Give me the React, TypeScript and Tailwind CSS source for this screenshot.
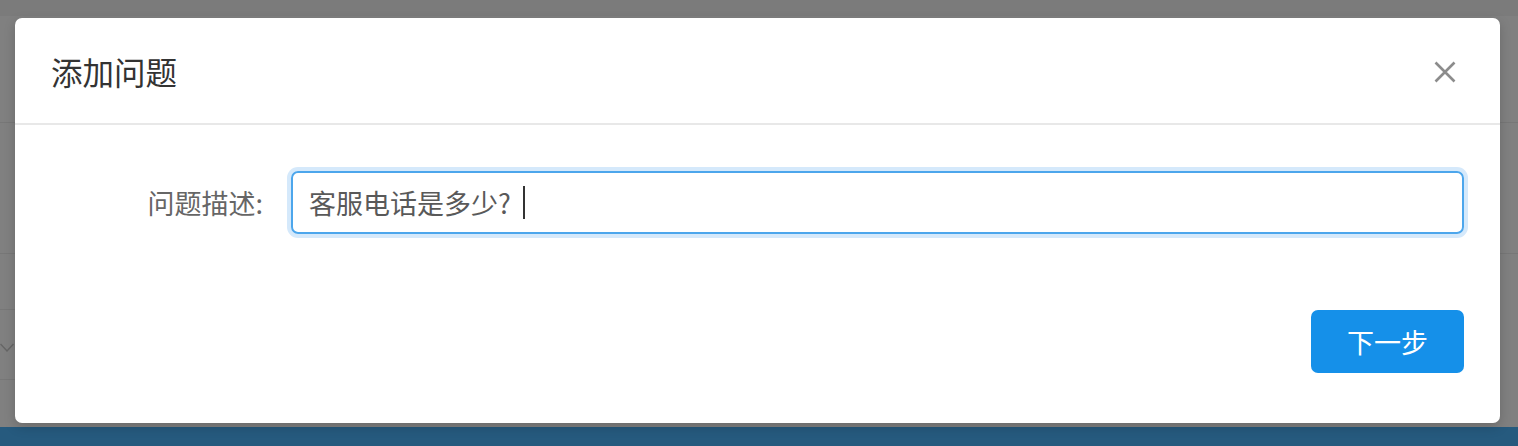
import React from "react";

export default function App() {
  return (
    <div
      className="relative w-[1518px] h-[446px] overflow-hidden bg-[#808080] flex flex-col"
      style={{ fontFamily: '"Noto Sans CJK SC", "Noto Sans", sans-serif' }}
    >
      {/* underlying page (dimmed by overlay) */}
      <div className="h-[16px] bg-[#7b7b7b] shrink-0" />
      <div className="h-[107px] border-b border-[#777777] shrink-0" />
      <div className="h-[131px] border-b border-[#777777] shrink-0" />
      <div className="h-[56px] shrink-0 flex">
        <div className="w-[700px] border-b border-[#777777]" />
      </div>
      <div className="h-[70px] shrink-0 flex">
        <div className="w-[700px] border-b border-[#777777] flex items-center">
          <svg width="14" height="10" viewBox="0 0 14 10" className="mt-[6px]">
            <path d="M0.5 1 L7 8 L13.5 1" fill="none" stroke="#666666" strokeWidth="1.5" />
          </svg>
        </div>
      </div>
      <div className="flex-1" />
      <div className="h-[19px] bg-[#265a7e] shrink-0" />

      {/* modal */}
      <div className="absolute left-[15px] top-[18px] w-[1485px] h-[405px] bg-white rounded-[7px] shadow-[0_4px_12px_rgba(0,0,0,0.18)] flex flex-col">
        <div className="h-[107px] shrink-0 border-b-2 border-[#e8e8e8] flex items-center justify-between pl-[36px] pr-[44px]">
          <span className="text-[31.5px] leading-[40px] text-[#333333]">添加问题</span>
          <svg width="22" height="22" viewBox="0 0 22 22" className="mt-[2px]">
            <path d="M1.5 1.5 L20.5 20.5 M20.5 1.5 L1.5 20.5" stroke="#8c8c8c" strokeWidth="2.6" fill="none" />
          </svg>
        </div>
        <div className="flex items-center pt-[46px] pr-[36px]">
          <div className="w-[248px] text-right text-[27px] leading-[36px] text-[#666666] shrink-0">问题描述:</div>
          <div className="ml-[28px] flex-1 h-[63px] rounded-[7px] border-2 border-[#4ca6ec] shadow-[0_0_0_4px_#d5e9fb] flex items-center pl-[16px]">
            <span className="text-[27px] leading-[36px] text-[#595959] whitespace-pre">客服电话是多少? </span>
            <span className="w-[2px] h-[33px] bg-[#333333] ml-[6px]" />
          </div>
        </div>
        <div className="flex-1" />
        <div className="flex justify-end pr-[36px] pb-[50px]">
          <button className="w-[153px] h-[63px] rounded-[7px] bg-[#1590e9] text-white text-[27px] leading-[36px] flex items-center justify-center">
            下一步
          </button>
        </div>
      </div>
    </div>
  );
}
